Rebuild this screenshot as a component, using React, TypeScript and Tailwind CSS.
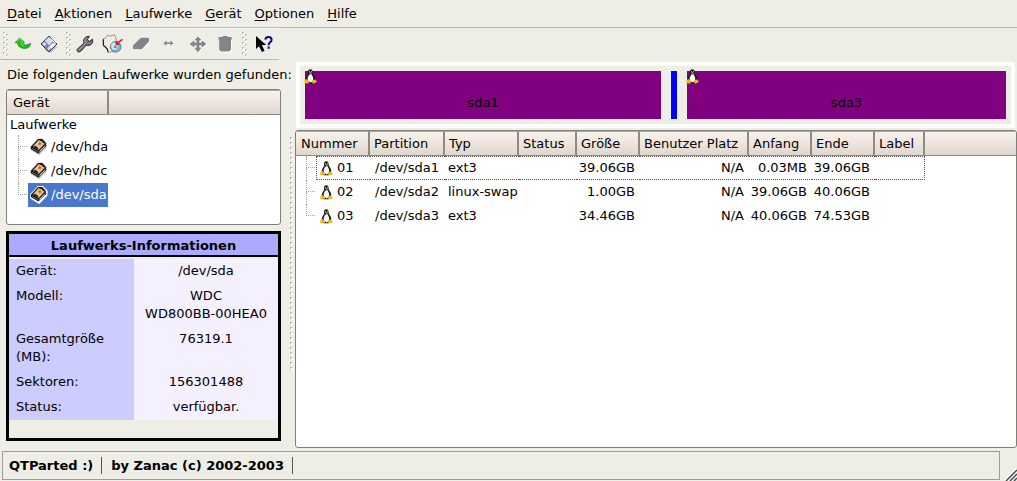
import React from "react";

const FONT = "font-['DejaVu_Sans',sans-serif]";

const HEADER =
  "bg-gradient-to-b from-[#f9f2ea] via-[#eee6de] to-[#dfd7ce] border-b border-b-[#8f8b80]";

function Tux({ className = "" }: { className?: string }) {
  return (
    <svg viewBox="0 0 13 15" className={`h-[15px] w-[13px] shrink-0 ${className}`} aria-hidden="true">
      <path d="M4.3 1Q6.3-.5 8.2 1L8.8 4.5 11 8.2 11.2 12 8.6 14.2H4.2L1.5 12 2 8.5 4 5Z" fill="#16161a" />
      <path d="M5.2 5.4 7.7 5.2 9.2 8.8 8.8 12.2 6.8 13.4 4.2 12.2 3.5 9Z" fill="#f6f6f6" />
      <path d="M5 2.2h1v1H5zM7 2.2h1v1H7z" fill="#d8d8d8" />
      <path d="M4.9 3.8 6.5 3.3 8.1 3.9 6.5 5.1Z" fill="#d9a02a" />
      <path d="M2 10 3.4 10.5 5 13.1 4.4 14.7 .3 13.9 .6 11.6Z" fill="#f2b90c" />
      <path d="M8.8 10.8 11 10.4 12.8 12.4 12 13.6 9.2 14.7 8.1 13.7Z" fill="#f2b90c" />
    </svg>
  );
}

function DriveIcon({ selected = false }: { selected?: boolean }) {
  return (
    <svg viewBox="0 0 18 18" className="h-[18px] w-[18px] shrink-0" aria-hidden="true">
      <path
        d="M1 8.8 8.3 1 12.5 1 16.6 5.2 16.5 9 9 16.8 1 11.8Z"
        fill={selected ? "#fff" : "#b5b5b5"}
        stroke={selected ? "#fff" : "#c8c8c8"}
        strokeWidth={selected ? 2 : 1}
      />
      <path d="M.8 8.8 8.1 1 12.3 1 16 5.2 15.8 8.2 8.4 15.6 .8 11Z" fill="#181818" />
      <path d="M2.8 8.4 8.8 2 14.6 5.8 8.4 12.3Z" fill="#f1c99b" />
      <circle cx="9.8" cy="5.6" r="2.9" fill="#e9b177" />
      <circle cx="9.8" cy="5.7" r="1.1" fill="#94612f" />
      <path d="M2.6 8.9 5.2 7.4 8.6 10.2 7.9 12.3Z" fill="#262626" />
      <path d="M9.4 13.4 14.8 8" stroke="#e5e5e5" strokeWidth="1" />
      <path d="M2 10.3 8 13.8" stroke="#777" strokeWidth=".8" />
    </svg>
  );
}

function Grip() {
  return (
    <svg viewBox="0 0 7 28" className="h-[28px] w-[7px] shrink-0" aria-hidden="true">
      {[0, 5, 10, 15, 20].map((y) => (
        <g key={y}>
          <path d={`M3 ${y + 3}h2v2h-2z`} fill="#fff" />
          <path d={`M2 ${y + 2}h2v1h-1v1h-1z`} fill="#bcbcb6" />
          <path d={`M6 ${y + 5}h1v2h-2v-1h1z`} fill="#fff" />
          <path d={`M5 ${y + 4}h2v1h-1v1h-1z`} fill="#bcbcb6" />
        </g>
      ))}
    </svg>
  );
}

function ToolButton({
  label,
  wide = true,
  disabled = false,
  children,
}: {
  label: string;
  wide?: boolean;
  disabled?: boolean;
  children: React.ReactNode;
}) {
  return (
    <button
      type="button"
      aria-label={label}
      disabled={disabled}
      className={`flex h-[28px] items-center justify-center ${wide ? "w-[28px]" : "w-[26px]"}`}
    >
      <svg viewBox="0 0 22 20" className="h-[20px] w-[22px]" aria-hidden="true">
        {children}
      </svg>
    </button>
  );
}

function Toolbar() {
  return (
    <div className="flex h-[32px] w-[279px] items-center border-b border-[#b7b8ae] border-t border-t-[#f8f8f4] pl-px">
      <Grip />
      <div className="flex px-[2px]">
        <ToolButton label="Rückgängig" wide={false}>
          <path d="M3 8.6 7.6 4.2 12.6 8.2 10.6 9Q11 11.2 14 10.9 16.8 10.6 18.6 9.2 18.4 13 15 14.2 10.6 15.4 7.4 12.8 5.6 11.2 5.6 9Z" fill="#22b81c" stroke="#16851a" strokeWidth=".7" />
          <path d="M4.6 8.2 7.6 5.2 11 7.8 9 8.4Q8.8 11.2 11.6 12.3" fill="none" stroke="#6fe058" strokeWidth="1" />
        </ToolButton>
        <ToolButton label="Speichern" wide={false}>
          <path d="M6 16 12 19 20 13 15 11Z" fill="#c9c9c0" />
          <path d="M3 10 11 2 19 10 11 18Z" fill="#7a7fb5" stroke="#33354c" strokeWidth="1" />
          <path d="M6.7 6.7 11 2.8 15.3 7 11 11.3Z" fill="#d8dbea" />
          <path d="M11 12.5 14.6 9 18 10.2 13.3 15Z" fill="#f4f4fb" />
          <path d="M4 10 6 8 8.5 10.3 6.5 12.3ZM9 14.7 11 12.6 12.6 14.2 10.8 16.5Z" fill="#dcdff0" />
          <path d="M13 4.8 17.7 9.5" stroke="#eff0f6" strokeWidth="1.2" />
        </ToolButton>
      </div>
      <Grip />
      <div className="flex pr-px">
        <ToolButton label="Eigenschaften">
          <path d="M3.2 15.3 10 9.2Q8.5 4.8 12.4 2.7L15.4 2.2 13.4 5.4 15.2 7.5 18.5 5.2Q19.5 9.2 16.4 11 14.1 12 12.2 11.2L6.5 17.5Q4.5 18.8 3.3 17.2 2.7 16.2 3.2 15.3Z" fill="#77777c" stroke="#2b2b30" strokeWidth="1" />
          <path d="M5 16 11.2 9.9Q9.7 5.7 13 3.9" fill="none" stroke="#aaaab2" strokeWidth=".8" />
        </ToolButton>
        <ToolButton label="Formatieren">
          <path d="M1 5 3.8 3.7 5.3 1.2 8.2 2 12.8 .8 15.6 10 14.2 17.2 6 18.4 5 14.8 1.3 11.3Z" fill="#f0ead9" stroke="#8a867a" strokeWidth=".8" />
          <path d="M1.4 5.2v6l3.8 3.5.9 3.4" fill="none" stroke="#24221f" strokeWidth="1.2" />
          <circle cx="13.7" cy="12.8" r="5.3" fill="#79b8cf" stroke="#32708c" strokeWidth=".8" />
          <ellipse cx="12.4" cy="12.1" rx="3.3" ry="3.7" fill="#cfe6ec" />
          <circle cx="13.3" cy="12.9" r="1.3" fill="#4f91a9" />
          <path d="M20.5 5.3 15.6 8.8" stroke="#c52b2b" strokeWidth="1.6" />
          <path d="M13.6 6.8 13.6 11.4 18 10.6Z" fill="#bb2525" />
        </ToolButton>
        <ToolButton label="Löschen" disabled>
          <path d="M4 13.5 10.8 5H19.8V8.8L13.2 16.3H4.5Z" fill="#fff" />
          <path d="M3 11.5 10 4.5Q11 3.8 12 3.8H18Q19 3.8 19 5V7.6L12.3 14.8Q12 15.3 11 15.3H4Q3 15.3 3 14.3Z" fill="#858387" />
        </ToolButton>
        <ToolButton label="Größe ändern" disabled>
          <path d="M6.5 10.3 9.3 7.7v1.9h4.4V7.7l2.8 2.6-2.8 2.6V11H9.3v1.9Z" fill="#fff" />
          <path d="M5.5 9.3 8.5 6.5v2h4v-2l3 2.8-3 2.8v-2h-4v2Z" fill="#858387" />
        </ToolButton>
        <ToolButton label="Verschieben" disabled>
          <g strokeWidth=".7">
            <path d="m12 3 3 3h-2v3h3V7l4 3-4 3v-2h-3v3h2l-3 4-3-4h2v-3H8v2l-4-3 4-3v2h3V6H9Z" transform="translate(1 1)" fill="#fff" stroke="#fff" />
            <path d="m12 3 3 3h-2v3h3V7l4 3-4 3v-2h-3v3h2l-3 4-3-4h2v-3H8v2l-4-3 4-3v2h3V6H9Z" fill="#858387" stroke="#858387" />
          </g>
        </ToolButton>
        <ToolButton label="Entfernen" disabled>
          <path d="M6 4h12.5v3H18v10l-1.5 1.8h-8L7 17V7z" fill="#fff" />
          <path d="M8.5 3V2h5v1H17.6v3H17v9.5L15.2 17.6H7L5.2 15.5V6H4.6V3Z" fill="#858387" />
        </ToolButton>
      </div>
      <Grip />
      <div className="flex pl-[3px]">
        <ToolButton label="Direkthilfe">
          <path d="M3 2v13l3-2.8L9 18l2.5-1.3L8.8 11h4.4Z" fill="#000" />
          <path d="M12.3 5.6Q12.5 3 15.4 3 18.6 3 18.6 5.8 18.6 7.4 17 8.4 15.7 9.2 15.7 11.2" fill="none" stroke="#0b0b84" strokeWidth="2" />
          <path d="M14.7 12.5h2v2.2h-2z" fill="#0b0b84" />
        </ToolButton>
      </div>
    </div>
  );
}

const menus = ["Datei", "Aktionen", "Laufwerke", "Gerät", "Optionen", "Hilfe"];

const drives = ["/dev/hda", "/dev/hdc", "/dev/sda"];

const driveInfo: [string, string][] = [
  ["Gerät:", "/dev/sda"],
  ["Modell:", "WDC WD800BB-00HEA0"],
  ["Gesamtgröße (MB):", "76319.1"],
  ["Sektoren:", "156301488"],
  ["Status:", "verfügbar."],
];

const columns = ["Nummer", "Partition", "Typ", "Status", "Größe", "Benutzer Platz", "Anfang", "Ende", "Label"];

const partitions = [
  ["01", "/dev/sda1", "ext3", "", "39.06GB", "N/A", "0.03MB", "39.06GB", ""],
  ["02", "/dev/sda2", "linux-swap", "", "1.00GB", "N/A", "39.06GB", "40.06GB", ""],
  ["03", "/dev/sda3", "ext3", "", "34.46GB", "N/A", "40.06GB", "74.53GB", ""],
];

function Branch({ last }: { last: boolean }) {
  return (
    <span className="flex h-[24px] w-[9px] shrink-0 flex-col" aria-hidden="true">
      <span className="h-[12px] border-b border-l border-dotted border-[#a5a59d]" />
      {!last && <span className="h-[12px] border-l border-dotted border-[#a5a59d]" />}
    </span>
  );
}

function DriveList() {
  return (
    <div className="h-[136px] rounded-[3px] border border-[#7d7f78] bg-white">
      <div className={`flex h-[25px] items-center border-t border-t-[#a9aaa2] ${HEADER}`}>
        <div className="flex h-full w-[102px] items-center border-r-2 border-r-[#8f8b80] pl-[6px]">Gerät</div>
      </div>
      <div className="h-[20px] pl-[3px] leading-[19px]">Laufwerke</div>
      <ul>
        {drives.map((name, i) => {
          const selected = name === "/dev/sda";
          return (
            <li key={name} className="flex h-[24px] pl-[11px]">
              <Branch last={i === drives.length - 1} />
              <button
                type="button"
                className={`ml-px flex h-[24px] items-center gap-[3px] pr-px pl-[2px] ${selected ? "bg-[#4977d0] text-white" : ""}`}
              >
                <DriveIcon selected={selected} />
                {name}
              </button>
            </li>
          );
        })}
      </ul>
    </div>
  );
}

function DriveInfo() {
  return (
    <section className="h-[210px] border-[3px] border-black">
      <h2 className="h-[23px] border-b-2 border-black bg-[#aaaaff] text-center leading-[23px] font-bold">
        Laufwerks-Informationen
      </h2>
      <table className="mt-[2px] w-full table-fixed border-separate border-spacing-0 leading-[18px]">
        <colgroup>
          <col className="w-[125px]" />
          <col />
        </colgroup>
        <tbody>
          {driveInfo.map(([key, value]) => (
            <tr key={key} className="align-top">
              <th scope="row" className="bg-[#ccccff] px-[7px] pt-[3px] pb-[4px] text-left font-normal">
                {key}
              </th>
              <td className="bg-[#f5f0ff] px-[7px] pt-[3px] pb-[4px] text-center">
                {value.split(" ").map((word, i) => (
                  <React.Fragment key={word}>
                    {i > 0 && " "}
                    <span className="whitespace-nowrap">{word}</span>
                  </React.Fragment>
                ))}
              </td>
            </tr>
          ))}
        </tbody>
      </table>
    </section>
  );
}

function Block({ name, grow }: { name: string; grow: string }) {
  return (
    <div className={`relative flex h-[48px] basis-0 items-center justify-center bg-[#800080] pt-[15px] ${grow}`}>
      <Tux className="absolute -top-[2px] -left-px" />
      {name}
    </div>
  );
}

function DiskMap() {
  return (
    <div className="mr-[2px] ml-px border-4 border-white p-[5px]">
      <div className="flex gap-[10px]">
        <Block name="sda1" grow="grow-[356]" />
        <div className="h-[48px] w-[6px] bg-[#0000ff]" />
        <Block name="sda3" grow="grow-[319]" />
      </div>
    </div>
  );
}

function PartitionTable() {
  return (
    <div className="mt-[2px] flex-1 rounded-[3px] border border-[#7d7f78] bg-white">
      <table className="w-full table-fixed border-separate border-spacing-0">
        <colgroup>
          <col className="w-[74px]" />
          <col className="w-[75px]" />
          <col className="w-[74px]" />
          <col className="w-[58px]" />
          <col className="w-[63px]" />
          <col className="w-[109px]" />
          <col className="w-[63px]" />
          <col className="w-[63px]" />
          <col className="w-[50px]" />
          <col />
        </colgroup>
        <thead>
          <tr>
            {columns.map((c, i) => (
              <th
                key={c}
                scope="col"
                className={`h-[25px] border-t border-r-2 border-t-[#a9aaa2] border-r-[#8f8b80] p-0 text-left font-normal whitespace-nowrap ${i === 0 ? "pl-[5px]" : "pl-[4px]"} ${HEADER}`}
              >
                {c}
              </th>
            ))}
            <td className={`border-t border-t-[#a9aaa2] p-0 ${HEADER}`} />
          </tr>
        </thead>
        <tbody>
          {partitions.map((row, r) => (
            <tr key={row[0]}>
              {row.map((v, c) => {
                const focus = r === 0 ? "border-y border-dotted border-[#555]" : "";
                const right = c >= 4 && c <= 7;
                if (c === 0)
                  return (
                    <td key={c} className="h-[24px] p-0 pl-[10px]">
                      <div className="flex h-[24px]">
                        <Branch last={r === partitions.length - 1} />
                        <span
                          className={`ml-px flex flex-1 items-center gap-[4px] ${r === 0 ? "border-y border-l border-dotted border-[#555] pl-[3px]" : "pl-[4px]"}`}
                        >
                          <Tux />
                          {v}
                        </span>
                      </div>
                    </td>
                  );
                return (
                  <td
                    key={c}
                    className={`h-[24px] p-0 whitespace-nowrap ${focus} ${r === 0 && c === 8 ? "border-r" : ""} ${right ? "pr-[5px] text-right" : c === 1 ? "pl-[5px]" : "pl-[3px]"}`}
                  >
                    {v}
                  </td>
                );
              })}
              <td className="p-0" />
            </tr>
          ))}
        </tbody>
      </table>
    </div>
  );
}

function Splitter() {
  return (
    <div className="flex w-[14px] shrink-0 justify-end pt-[77px] pr-[2px]" aria-hidden="true">
      <svg className="h-[233px] w-[4px]">
        <defs>
          <pattern id="dots" width="4" height="5" patternUnits="userSpaceOnUse">
            <path d="M2 1h2v2h-2z" fill="#fff" />
            <path d="M1 0h2v1h-1v1h-1z" fill="#b4b4ae" />
          </pattern>
        </defs>
        <rect width="4" height="233" fill="url(#dots)" />
      </svg>
    </div>
  );
}

export default function App() {
  return (
    <div className={`flex min-h-screen flex-col bg-[#eeeee6] text-[13px] leading-[18px] text-black ${FONT}`}>
      <nav className="flex h-[28px] gap-[13px] border-b border-[#b7b8ae] pl-[7px]">
        {menus.map((m) => (
          <button key={m} type="button">
            <span className="underline underline-offset-2">{m[0]}</span>
            {m.slice(1)}
          </button>
        ))}
      </nav>
      <Toolbar />
      <main className="flex flex-1">
        <div className="flex w-[281px] shrink-0 flex-col pl-[6px]">
          <p className="mt-[6px] mb-[5px] pl-px whitespace-nowrap">Die folgenden Laufwerke wurden gefunden:</p>
          <DriveList />
          <div className="mt-[6px]">
            <DriveInfo />
          </div>
        </div>
        <Splitter />
        <div className="flex min-w-0 flex-1 flex-col pt-[2px]">
          <DiskMap />
          <PartitionTable />
        </div>
      </main>
      <footer className="mt-[3px] flex items-end justify-between pl-[2px]">
        <div className="mb-px flex h-[29px] flex-1 items-center border border-[#9c9d94] pl-[6px] font-bold">
          <span className="border-r border-[#555] pr-[8px] leading-[17px]">QTParted :)</span>
          <span className="border-r border-[#555] pr-[8px] pl-[9px] leading-[17px]">by Zanac (c) 2002-2003</span>
        </div>
        <svg viewBox="0 0 12 12" className="ml-[5px] h-[12px] w-[12px] shrink-0" aria-hidden="true">
          <path d="M-1 12 12-1M3 12 12 3M7 12 12 7" stroke="#fff" strokeWidth="1.4" />
          <path d="M1 12 12 1M5 12 12 5M9 12 12 9" stroke="#4c4e49" strokeWidth="1.5" />
        </svg>
      </footer>
    </div>
  );
}
